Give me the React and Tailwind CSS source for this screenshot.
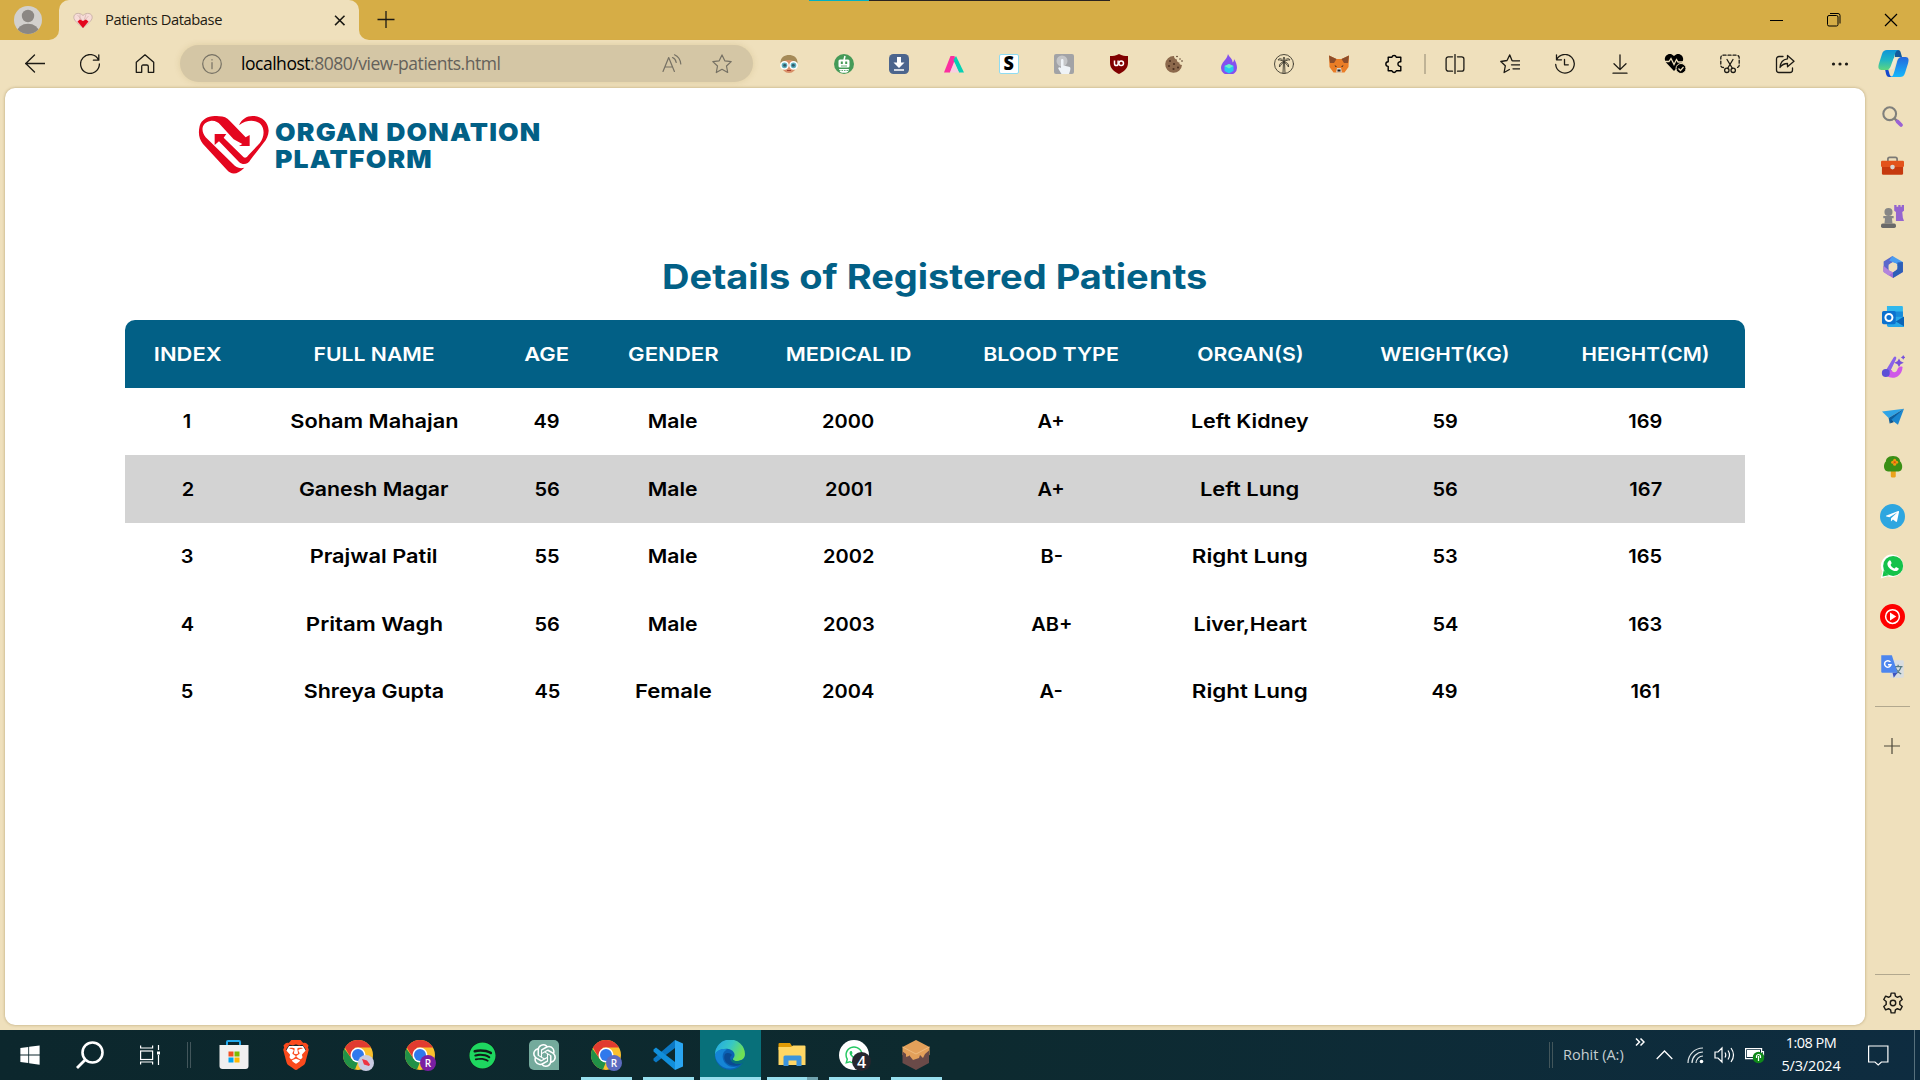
import { FaSpotify, FaWhatsapp, FaTelegramPlane, FaWindows } from "react-icons/fa";
import { SiBrave, SiOpenai } from "react-icons/si";

const columns = [
  ["INDEX", "scale-x-[1.14]"],
  ["FULL NAME", "scale-x-[1.1]"],
  ["AGE", "scale-x-[1.14]"],
  ["GENDER", "scale-x-[1.15]"],
  ["MEDICAL ID", "scale-x-[1.13]"],
  ["BLOOD TYPE", "scale-x-[1.11]"],
  ["ORGAN(S)", "scale-x-[1.1]"],
  ["WEIGHT(KG)", "scale-x-[1.08]"],
  ["HEIGHT(CM)", "scale-x-[1.075]"],
];

const patients = [
  ["1", "Soham Mahajan", "49", "Male", "2000", "A+", "Left Kidney", "59", "169"],
  ["2", "Ganesh Magar", "56", "Male", "2001", "A+", "Left Lung", "56", "167"],
  ["3", "Prajwal Patil", "55", "Male", "2002", "B-", "Right Lung", "53", "165"],
  ["4", "Pritam Wagh", "56", "Male", "2003", "AB+", "Liver,Heart", "54", "163"],
  ["5", "Shreya Gupta", "45", "Female", "2004", "A-", "Right Lung", "49", "161"],
];

const stretch = {
  "Soham Mahajan": "scale-x-[1.13]",
  "Ganesh Magar": "scale-x-[1.105]",
  "Prajwal Patil": "scale-x-[1.13]",
  "Pritam Wagh": "scale-x-[1.155]",
  "Shreya Gupta": "scale-x-[1.115]",
  Male: "scale-x-[1.1]",
  Female: "scale-x-[1.15]",
  "Left Kidney": "scale-x-[1.115]",
  "Left Lung": "scale-x-[1.14]",
  "Right Lung": "scale-x-[1.165]",
  "Liver,Heart": "scale-x-[1.105]",
};

const rowGrid = "grid grid-cols-[125px_248px_98px_154px_197px_209px_188px_202px_199px] items-center text-center";

const Line = ({ children, size = 20, w = 1.2, className = "text-[#1c1a14]" }) => (
  <svg width={size} height={size} viewBox="0 0 20 20" fill="none" stroke="currentColor" strokeWidth={w} strokeLinecap="round" strokeLinejoin="round" className={`shrink-0 ${className}`}>
    {children}
  </svg>
);
const Art = ({ children, size = 20, box = "0 0 20 20" }) => (
  <svg width={size} height={size} viewBox={box} className="shrink-0">{children}</svg>
);
const Slot = ({ children }) => <div className="flex h-full w-[55px] shrink-0 items-center justify-center">{children}</div>;

function TitleBar() {
  return (
    <div className="flex h-10 bg-[#d6ad46]">
      <div className="flex w-[59px] bg-[#efe0bc]">
        <div className="flex flex-1 items-center justify-center rounded-br-[10px] bg-[#d6ad46] pr-1">
          <svg width="28" height="28" viewBox="0 0 28 28">
            <clipPath id="av"><circle cx="14" cy="14" r="14" /></clipPath>
            <g clipPath="url(#av)">
              <rect width="28" height="28" fill="#d2d0cd" />
              <circle cx="14" cy="10" r="6.2" fill="#8b8783" />
              <ellipse cx="14" cy="26" rx="11" ry="8.2" fill="#8b8783" />
            </g>
          </svg>
        </div>
      </div>
      <div className="flex bg-[#d6ad46]">
        <div className="flex w-[300px] items-center rounded-t-[10px] bg-[#efe0bc] pl-[14px] pr-[10px]">
          <svg width="20" height="17" viewBox="0 0 20 17">
            <path d="M10 16C6 12 .8 9 .8 5.3.8 1 6.500 0 10 3.500 13.500 0 19.200 1 19.200 5.300 19.200 9 14 12 10 16z" fill="#f7dcd8" stroke="#c3a9a3" strokeWidth=".8" />
            <path d="M4.500 3 9 8M7 2.500v6M13 2.500l-2 6M15.500 4 11 9" stroke="#cdaaa5" strokeWidth=".6" />
            <path d="M4.500 9.500 7 7.500l3 1.500 3-1.500 2.500 2L10 16z" fill="#e3071d" />
          </svg>
          <span className="ml-[12px] flex-1 whitespace-nowrap pb-[2px] text-[14.7px] tracking-[-0.4px] text-[#1f1b12]">Patients Database</span>
          <Line size={18} w={1.7}><path d="M4.500 5.200 15 15.700M15 5.200 4.500 15.700" strokeLinecap="butt" /></Line>
        </div>
      </div>
      <div className="w-[10px] bg-[#efe0bc]"><div className="h-full rounded-bl-[10px] bg-[#d6ad46]" /></div>
      <div className="flex items-center pl-[7px]">
        <Line w={1.300}><path d="M1.500 9.500h17M10 1v17" strokeLinecap="butt" /></Line>
      </div>
      <div className="ml-[413px] flex h-px w-[301px]"><div className="w-[60px] bg-[#00b1c4]" /><div className="flex-1 bg-[#2b2320]" /></div>
      <div className="ml-auto flex items-center text-black">
        <div className="flex w-[57px] justify-center"><div className="h-px w-[13px] bg-black" /></div>
        <div className="flex w-[57px] justify-center">
          <svg width="14" height="14" viewBox="0 0 14 14" fill="none" stroke="black"><rect x=".5" y="2.500" width="10.500" height="10.500" rx="1.500" /><path d="M3 .5h8a2 2 0 0 1 2 2v8" /></svg>
        </div>
        <div className="flex w-[58px] justify-center">
          <svg width="14" height="14" viewBox="0 0 14 14" stroke="black" strokeWidth="1.200"><path d="M1 1l12 12M13 1 1 13" /></svg>
        </div>
      </div>
    </div>
  );
}

function Extensions() {
  const icons = [
    <Art><circle cx="10" cy="11.500" r="7.500" fill="#d98f68" /><path d="M1.500 9.500C1 3 6 1 10 1s9 2 8.500 8.500C14 7 13 6 10 6s-6 1-8.500 3.500z" fill="#a58a57" /><g stroke="#fff" strokeWidth="1.500"><circle cx="5.500" cy="11.300" r="3.600" fill="#5db0bf" /><circle cx="14.500" cy="11.300" r="3.600" fill="#5db0bf" /></g><circle cx="5.700" cy="11.300" r="1.500" fill="#365b6b" /><circle cx="14.300" cy="11.300" r="1.500" fill="#365b6b" /><path d="M8 16.500h4" stroke="#a83e30" /></Art>,
    <Art><circle cx="10" cy="10" r="10" fill="#459a58" /><path d="M10 6 11 2" stroke="#fff" strokeWidth="1.500" /><rect x="4.500" y="5.500" width="11" height="8" rx="1.500" fill="#fff" /><rect x="6.800" y="7.500" width="2" height="2.500" fill="#459a58" /><rect x="11.200" y="7.500" width="2" height="2.500" fill="#459a58" /><path d="M7 12h6" stroke="#459a58" strokeWidth=".8" /><path d="M5 15h10l-1 3a10 10 0 0 1-8 0z" fill="#fff" /><path d="M5 16.500h10" stroke="#459a58" strokeWidth=".8" strokeDasharray="1.500 1" /></Art>,
    <Art><rect width="20" height="20" rx="4.500" fill="#4c658d" /><path d="M8 3h4v5.500h3.500L10 14 4.500 8.500H8z" fill="#fff" /><path d="M5 16h10" stroke="#fff" strokeWidth="1.500" /></Art>,
    <Art><path d="M0 18.500 6.500 2h4l1 4-5.500 12.500z" fill="#fb2fa0" /><path d="m9.500 6 2.500-4 8 16.500h-5z" fill="#06d0b4" /><path d="m10 8 5 10.500H6z" fill="#f8cfe0" /></Art>,
    <div className="flex h-5 w-5 items-center justify-center rounded-[2px] border border-[#8fdcf2] bg-white pb-px text-[20px] font-extrabold leading-none text-black"><span className="scale-x-90">S</span></div>,
    <Art><rect width="20" height="20" rx="2" fill="#a2a3a6" /><circle cx="8" cy="7" r="5.500" fill="#c5c6c8" /><path d="M7 6c0-1.500 2.500-1.500 2.500 0v5.500l5.500 1.200c2 .5 1.500 2 1 4.300l-1 3H7.500L4.500 15c-1-1.500 1-2.500 2.500-1z" fill="#eff3f7" /></Art>,
    <Art><path d="M10 0c3 1.800 6 2 9 2v7c0 6-5 9-9 11-4-2-9-5-9-11V2c3 0 6-.2 9-2z" fill="#800000" /><path d="M5.500 6.500v3.200a1.800 1.800 0 0 0 3.600 0V6.500" fill="none" stroke="#fff" strokeWidth="1.500" /><circle cx="12.200" cy="9.200" r="2.300" fill="none" stroke="#fff" strokeWidth="1.500" /></Art>,
    <Art><path d="M10 2a8.400 8.400 0 1 0 8 9c-2 0-3-1-2.500-2.500-2 0-3-1.500-2.500-3C11.500 5.500 10 4 10 2z" fill="#8c694c" /><g fill="#4b3020"><circle cx="6" cy="7" r="1" /><circle cx="10" cy="10" r="1.100" /><circle cx="5" cy="12" r="1" /><circle cx="9.500" cy="15" r="1.100" /><circle cx="14" cy="13.500" r="1" /><circle cx="13" cy="2.500" r=".8" /><circle cx="16" cy="5" r=".7" /><circle cx="18" cy="7" r=".8" /></g></Art>,
    <Art><path d="M9 0c1 3 5 5 4.500 8.500C15 7.500 15 6 15 5c2 3 3 6 3 9a8 7 0 0 1-16 0C2 8 8 6 9 0z" fill="#8450ef" /><path d="m10 10 4.500 2v5L10 19.500 5.500 17v-5z" fill="#27c9f1" /><path d="m10 10 4.500 2-4.500 2.500L5.500 12z" fill="#67f0c9" /></Art>,
    <Line w={0.9} className="text-[#3c392e]"><circle cx="10" cy="10" r="9.500" /><path d="M9 19.200 9.500 8M11 19.200 10.500 8M10 8C8 4 5 4 4 6c2-.5 4 .5 6 2zM10 8c2-4 5-4 6-2-2-.5-4 .5-6 2zM10 8c-3 0-5 2-4.500 5C7 11 8 9 10 8zM10 8c3 0 5 2 4.500 5C13 11 12 9 10 8zM10 8C9 6 9 4 10 3c1 1 1 3 0 5z" /></Line>,
    <Art><path d="M0 1.500 7.500 5h5L20 1.500 19.500 13l-4 5.500h-11L.5 13z" fill="#ea7d26" /><path d="M0 1.500 7.500 5 5 9 1 9zM20 1.500 12.500 5 15 9l4 0z" fill="#8b4d2b" /><path d="M8 14h4l1 4.500H7z" fill="#ded3c8" /><path d="M8.500 15.500h3v2h-3z" fill="#222" /><path d="m5.500 11 2.500 1.500-1.500.5zM14.500 11 12 12.500l1.500.5z" fill="#3b2a24" /></Art>,
    <Line w={1.400} className="text-black"><path d="M4.200 3.200h3.700a2.300 2.300 0 0 1 4.400 0h4.500v4.500h-1a2.400 2.400 0 0 0 0 4.700h1v4.400h-4.500a2.300 2.300 0 0 1-4.400 0H4.200v-4.400a2.300 2.300 0 0 1 0-4.700z" /></Line>,
  ];
  return icons.map((ic, i) => <Slot key={i}>{ic}</Slot>);
}

function Toolbar() {
  return (
    <div className="flex h-12 items-center bg-[#efe0bc] pb-px pl-[7px]">
      <Slot><Line w={1.300}><path d="M.5 9.500H20M9.500 1 .8 9.500 9.500 18" /></Line></Slot>
      <Slot><Line w={1.300}><path d="M18.500 6A9.400 9.400 0 1 0 19.400 10M18.800.8v5.400h-5.400" /></Line></Slot>
      <Slot><Line w={1.300}><path d="M1.300 8.200 10 .8l8.700 7.400V18.300h-5.400v-5.800c0-1.300-.8-1.500-1.500-1.500H8.200c-.9 0-1.500.5-1.500 1.500v5.800H1.300z" /></Line></Slot>
      <div className="ml-2 mr-[8.5px] flex h-[37px] w-[573px] items-center rounded-full bg-[#d4c6a5] pl-[22px] pr-[21px] text-[#6e6c66] shadow-[0_0_6px_rgba(150,120,50,0.18)]">
        <Line className="text-[#767164]"><circle cx="10" cy="10" r="9.300" /><path d="M10 8.500v6.200M10 5.600v.4" /></Line>
        <span className="ml-[19px] flex-1 whitespace-nowrap pb-px text-[17.5px] tracking-[-0.47px] text-[#64615a]"><span className="text-black">localhost</span>:8080/view-patients.html</span>
        <Line className="mr-[30px] text-[#767164]"><path d="M1 17.500 6.700 3.500 12.400 17.500M3 13h7.500M10.500 3.500c2 .8 3.300 2.500 3.700 5M12.500.8c3.500 1.500 5.800 4.500 6.300 9.200" /></Line>
        <Line className="text-[#767164]"><path d="m10 .9 2.800 5.900 6.400.8-4.700 4.400 1.200 6.500L10 15.300l-5.700 3.200L5.500 12 .8 7.600l6.400-.8z" /></Line>
      </div>
      <Extensions />
      <div className="flex w-[6px] justify-center"><div className="h-5 w-[2px] bg-[#bfb396]" /></div>
      <Slot><Line w={1.300}><path d="M7.500 2.800H3.300a2.200 2.200 0 0 0-2.200 2.200v10a2.200 2.200 0 0 0 2.200 2.200h4.200M12.500 2.800h4.200a2.200 2.200 0 0 1 2.200 2.200v10a2.200 2.200 0 0 1-2.200 2.200h-4.200M10 .5v19" /></Line></Slot>
      <Slot><Line w={1.300}><path d="M12 6.500 9.800.9 7 6.500.8 7.500l4.500 4.300-1.200 6.700 5.300-3M12.500 6.800h7M11.500 10.800h8M13 14.800h6.500" /></Line></Slot>
      <Slot><Line w={1.300}><path d="M1.700 5.500A9.300 9.300 0 1 1 .7 10.500M1.500.8v5h5M9.500 5.500v5.300h3.800" /></Line></Slot>
      <Slot><Line w={1.300}><path d="M10 .8v14.500M4 9.800l6 5.800 6-5.800M3 19.200h14" /></Line></Slot>
      <Slot>
        <svg width="22" height="21" viewBox="0 0 22 21"><path d="M10 18 2 9.500C-2 4 5-2.500 10 3c5-5.500 12 1 8 6.500z" fill="#000" /><path d="M0 8.500h5l2-3 3 6 2.500-5 1.500 2.500h6" fill="none" stroke="#efe0bc" strokeWidth="1.300" /><circle cx="17" cy="15.500" r="5" fill="#000" stroke="#efe0bc" /><path d="m14.500 15.500 2 2 3-3.500" fill="none" stroke="#efe0bc" strokeWidth="1.200" /></svg>
      </Slot>
      <Slot><Line w={1.300}><path d="M3.500 13.500C1.500 13.500.8 12.500.8 11V3.800C.8 2 2 1.200 3.500 1.200h13c1.500 0 2.700.8 2.700 2.600V11c0 1.500-.7 2.500-2.700 2.500" strokeDasharray="3 2" /><path d="m7 5.500 5.500 9M13 5.500l-5.500 9" /><circle cx="6.800" cy="16.300" r="2.200" /><circle cx="13.200" cy="16.300" r="2.200" /></Line></Slot>
      <Slot><Line w={1.300}><path d="M8 2.500H4A2.500 2.500 0 0 0 1.500 5v11A2.500 2.500 0 0 0 4 18.500h11a2.500 2.500 0 0 0 2.500-2.500v-2M12.500 1.500 19 7.200l-6.500 5.600V9.500c-3.500 0-5.500 1-7.500 4C5.300 8.500 8 5.300 12.500 4.800z" /></Line></Slot>
      <Slot><Line><g fill="currentColor" stroke="none"><circle cx="3.500" cy="10" r="1.600" /><circle cx="10" cy="10" r="1.600" /><circle cx="16.500" cy="10" r="1.600" /></g></Line></Slot>
      <div className="flex w-[52px] justify-center">
        <svg width="31" height="27" viewBox="0 0 31 27">
          <defs>
            <linearGradient id="cpa" x1="0" y1="0" x2="0" y2="1"><stop offset="0" stopColor="#0f95d8" /><stop offset=".5" stopColor="#20b5c4" /><stop offset="1" stopColor="#5ed67e" /></linearGradient>
            <linearGradient id="cpb" x1="0" y1="0" x2="0" y2="1"><stop offset="0" stopColor="#2467dc" /><stop offset="1" stopColor="#15b8fb" /></linearGradient>
          </defs>
          <path d="M17 0h3c2 0 2.500 1.500 3 3.500L24 7h-7z" fill="#135a9b" />
          <path d="M11 27h4c-3 0-3.500-3-4-5l-1-3H7C8 24 8.500 27 11 27z" fill="#1448cc" />
          <path d="M9 0h12c-3 0-3.700 3-4.500 6l-2.500 9c-1 3.500-2 5-5 5H3.500C0 20 0 17 1 13.500L4 4C5 1 6.500 0 9 0z" fill="url(#cpa)" />
          <path d="M22 27H12c3 0 3.500-3 4.500-6l2.500-9c1-3.500 2-5 5-5h3.500c3.500 0 3.500 3 2.500 6.500L27 23c-1 3-2.500 4-5 4z" fill="url(#cpb)" />
          <path d="m13.500 14 1.500-4c.6-2 1.500-2.500 3.500-2.500h2.500c-2 1-2.500 2.500-3 4.500l-1.500 4.500c-.7 2-1.500 3-3.500 3h-3c2-1 2.500-2.500 3.500-5.500z" fill="#efe9d0" />
        </svg>
      </div>
    </div>
  );
}

function Logo() {
  return (
    <div className="ml-[193px] flex h-[60px] items-center">
      <svg width="71" height="60" viewBox="55 75 213 180" fill="#e4061f">
        <path d="M118 79C90 74 66 86 60 108 55 130 58 148 70 162L142 240C155 255 174 254 194 233 179 237 169 232 160 222L78 142C62 122 66 98 92 93 106 91 115 97 122 104L162 148 188 162 178 168H210V135L198 142 150 92C142 83 132 79 118 79z" />
        <path d="M105 132H140L132 143 192 202C198 205 202 201 206 196L240 160C254 141 256 118 243 103 230 89 200 88 178 106 186 86 204 76 224 78 248 80 266 97 267 122 266 136 261 148 252 158 236 180 222 196 212 210 206 222 190 227 178 216L118 154 105 165z" />
        <path d="M129 143 192 206C198 208 202 204 206 200L246 156C260 138 257 116 245 103 230 88 200 88 178 106" fill="none" stroke="#e4061f" strokeWidth="0" />
      </svg>
      <div className="ml-[6px] pt-[2px] font-['Inter'] text-[24.7px] font-black leading-[27.4px] tracking-[1.1px] text-[#026086]">
        <div className="origin-left scale-x-[1.075] whitespace-nowrap">ORGAN DONATION</div>
        <div className="origin-left scale-x-[1.075] whitespace-nowrap">PLATFORM</div>
      </div>
    </div>
  );
}

function Page() {
  return (
    <main className="ml-[5px] h-[937px] w-[1860px] shrink-0 overflow-hidden rounded-[10px] bg-white pt-[27px] shadow-[0_0_3px_rgba(110,85,30,0.45)]">
      <Logo />
      <h1 className="mt-[80px] text-center font-['Inter'] text-[34.4px] font-bold leading-[44px] text-[#026086]">
        <span className="inline-block scale-x-[1.105]">Details of Registered Patients</span>
      </h1>
      <div className="ml-[120px] mt-[21px] w-[1620px] font-['Inter'] text-[19.25px] font-[570] text-black">
        <div className={`${rowGrid} h-[68px] rounded-t-[10px] bg-[#026086] text-white`}>
          {columns.map(([label, sx]) => <div key={label}><span className={`inline-block whitespace-nowrap ${sx}`}>{label}</span></div>)}
        </div>
        {patients.map((row, r) => (
          <div key={r} className={`${rowGrid} ${r % 2 ? "h-[68px]" : "h-[67px]"} ${r === 1 ? "bg-[#d3d3d3]" : ""}`}>
            {row.map((v, c) => <div key={c}><span className={`inline-block whitespace-nowrap ${stretch[v] ?? "scale-x-[1.04]"}`}>{v}</span></div>)}
          </div>
        ))}
      </div>
    </main>
  );
}

function Sidebar() {
  const icons = [
    <Art size={22}><circle cx="7" cy="7" r="5.800" fill="none" stroke="#80807c" strokeWidth="1.900" /><path d="m11.500 11.500 2.500 2.500" stroke="#80807c" strokeWidth="2" /><path d="m14 14 3.300 3.300" stroke="#9b62d3" strokeWidth="3.400" strokeLinecap="round" /></Art>,
    <Art size={23}><path d="M6 6V3.500c0-1 .5-1.500 1.500-1.500h5c1 0 1.500.5 1.500 1.500V6" fill="none" stroke="#7c7a75" strokeWidth="1.500" /><rect x="0" y="5" width="20" height="5.500" rx="1" fill="#e3531b" /><path d="M.8 10.500h18.400V16q0 1.200-1.200 1.200H2Q.8 17.200.8 16z" fill="#c63a0e" /><circle cx="10" cy="10.500" r="2" fill="#dad7d2" /></Art>,
    <Art size={23}><g fill="#868686"><circle cx="6.500" cy="6" r="3.500" /><path d="M2 9.500h9v2H9.500L10 16H3l.5-4.500H2z" /><rect x="0" y="16" width="13" height="4" rx="1.500" fill="#696969" /></g><path d="M11.500 0h2v1.500h1.500V0h2v1.500H18V0h2v5l-1.500 1 .5 5 1 3h-7V6l-1.500-1z" fill="#9565cf" /></Art>,
    <Art size={22}><path d="M9.500 0 1.500 5v9l4.500 2.500V8l7-4.500z" fill="#5a68cc" /><path d="M9.500 0 19 5.500V14l-5-2.500v-4L6.500 4z" fill="#4a9df0" /><path d="M19 8v6.500L10 20 1.500 14.500V9L6 13l4 2z" fill="#9b6ad6" /><path d="M19 5.500v9l-9 5.500v-5l4-3V6z" fill="#2c5fb7" /><path d="M8 6.500h4.500L14 10l-2 3.500H8L6 10z" fill="#efe0bc" /><path d="M1.500 9 6 13l4 2-4 2.700L1.500 14.500z" fill="#b384dc" /></Art>,
    <Art size={22}><path d="M4.500 0H18q1 0 1 1v8H4.500z" fill="#30b8ed" /><path d="M5 5h14v5H5z" fill="#168ada" /><path d="M4.500 9.500 20 10v9H6q-1.500 0-1.500-1.500z" fill="#27a7e8" /><path d="M20 9.500v9L12.500 14z" fill="#0b64b6" /><rect y="4.500" width="12.500" height="12" rx="1.500" fill="#0b71cf" /><circle cx="6.300" cy="10.500" r="3.200" fill="none" stroke="#fff" strokeWidth="1.800" /></Art>,
    <Art size={24}><path d="M3 13c0 8 14 9 15-3-2.500-1-3.800.5-4.500 2.500-1 2.500-4 2.500-4.500 0z" fill="#cf58e8" /><path d="m4 13 6.500-11c1-1.500 3-.5 2 1.500L7.500 14z" fill="#8a63e8" /><circle cx="4" cy="15" r="3.300" fill="#5d50d6" /><path d="m15 3 1.300 2.200L19 6.500l-2.700 1.300L15 10l-1.300-2.200L11 6.500l2.700-1.300zM18.500 0l.7 1.300 1.300.7-1.300.7-.7 1.300-.7-1.300-1.300-.7 1.300-.7z" fill="#7751db" /></Art>,
    <Art size={22}><path d="M0 5 20 2.500 6 11z" fill="#2fa4e6" /><path d="M20 2.500 6 11l1 5z" fill="#0d5f9f" /><path d="M20 2.500 14.500 17 8.500 12.500z" fill="#1a86cf" /><path d="m7 16 2-3 2 1.500z" fill="#0b4f88" /></Art>,
    <Art size={22}><path d="M8 13h4.500v5.500q0 1-1 1H9q-1 0-1-1z" fill="#eba21c" /><path d="M10 0C5 0 3.500 3 3.500 5 1 7 1 14 5.500 14h9.500c4.500 0 4-7 1.500-9C16.500 3 15 0 10 0z" fill="#3a8f15" /><g fill="#f0980f"><circle cx="11.500" cy="4" r="1.400" /><circle cx="11.500" cy="7.500" r="1.400" /><circle cx="9.700" cy="5.700" r="1.400" /><circle cx="13.300" cy="5.700" r="1.400" /></g><circle cx="11.500" cy="5.700" r="1" fill="#e04412" /></Art>,
    <div className="flex h-[25px] w-[25px] items-center justify-center rounded-full bg-[#2ea6e0] text-white"><FaTelegramPlane size={15} /></div>,
    <Art size={25}><path d="M10.500.5a9 9 0 1 1-4.300 17.300L.5 19.500 2 14A9 9 0 0 1 10.500.5z" fill="#fff" /><circle cx="10.500" cy="9.500" r="8" fill="#14c24a" /><path d="M2 18 3 13l4 4z" fill="#14c24a" /><path d="M7 5.500c1-1 1.700-.3 2.200 1.500.3 1-.8 1.300-.7 1.700.5 1.500 2 2.500 3 2.900.5.100 1-1.300 1.600-1.100 2.400 1 2 1 1.600 2.100C13 15.500 6 12 5.900 8c0-1 .4-1.800 1.100-2.500z" fill="#fff" /></Art>,
    <Art size={25}><circle cx="10" cy="10" r="10" fill="#fe0000" /><circle cx="10" cy="10" r="5.500" fill="none" stroke="#fff" strokeWidth="1.200" /><path d="m8 6.800 5 3.200-5 3.200z" fill="#fff" /></Art>,
    <Art size={25}><rect x="8" y="5" width="11" height="14" rx="1" fill="#d9dde0" /><path d="M11 10h7M14.500 8.500V10M12 10c1 3 3 5 5 6M17 10c-1 3-3 5-5 6" fill="none" stroke="#577b86" /><path d="M1 1h8.500L14 15H1.800Q1 15 1 14z" fill="#4d86ee" /><path d="M10 15h4l-3 4z" fill="#3b53c0" /><path d="M8.300 6.300A2.600 2.600 0 1 0 8.800 8.500H6.400" fill="none" stroke="#fff" strokeWidth="1.200" /></Art>,
  ];
  return (
    <aside className="flex w-[55px] flex-col items-center pt-[3px]">
      {icons.map((ic, i) => <div key={i} className="flex h-[50px] w-full shrink-0 items-center justify-center pt-px">{ic}</div>)}
      <div className="mt-[15px] h-px w-[35px] bg-[#b2a88e]" />
      <div className="mr-px mt-[31px]"><Line size={16} w={1.500} className="text-[#4c483b]"><path d="M0 10h20M10 0v20" /></Line></div>
      <div className="mt-auto h-px w-[35px] bg-[#b2a88e]" />
      <div className="mb-[16px] mt-[17px]">
        <Line size={22} w={1.300}><path d="M8.300 1h3.400l.5 2.800 1.800 1 2.700-1 1.700 3-2.200 1.800v2.800l2.200 1.800-1.700 3-2.700-1-1.800 1-.5 2.800H8.300l-.5-2.800-1.800-1-2.700 1-1.700-3 2.200-1.800V8.600L1.600 6.800l1.700-3 2.700 1 1.800-1z" /><circle cx="10" cy="10" r="2.500" /></Line>
      </div>
    </aside>
  );
}

const Chrome = ({ badge, letter }) => (
  <div className="relative h-[30px] w-[30px]">
    <svg width="30" height="30" viewBox="0 0 30 30">
      <clipPath id="chr"><circle cx="15" cy="15" r="15" /></clipPath>
      <g clipPath="url(#chr)">
        <rect width="30" height="30" fill="#fbc02d" />
        <path d="M-2 4 8.500 18.500 15 22 11 32H-4z" fill="#219147" />
        <path d="M1 6 8 18 12 7.500h20V-2H2z" fill="#e13b30" />
      </g>
      <circle cx="15" cy="15" r="7.500" fill="#fff" /><circle cx="15" cy="15" r="6" fill="#3079ec" />
    </svg>
    <div className={`absolute -bottom-px -right-px flex h-4 w-4 items-center justify-center rounded-full text-[10px] font-semibold leading-none text-white ${badge}`}>
      {letter || <svg width="10" height="8" viewBox="0 0 10 8"><path d="M1 0l5 1.500L9 5.500 8 7 3 5.500z" fill="#ee3342" /></svg>}
    </div>
  </div>
);

function Taskbar() {
  const apps = [
    [<svg width="30" height="30" viewBox="0 0 30 30"><path d="M8 6V2q0-1 1-1h11q1 0 1 1v4" fill="none" stroke="#23a9ec" strokeWidth="2" /><path d="M.5 5h29v21q0 3-3 3h-23q-3 0-3-3z" fill="#f0f0f0" /><path d="M9.500 11.500h5v5h-5z" fill="#f25022" /><path d="M15.500 11.500h5v5h-5z" fill="#7fba00" /><path d="M9.500 17.500h5v5h-5z" fill="#00a4ef" /><path d="M15.500 17.500h5v5h-5z" fill="#ffb900" /></svg>],
    [<div className="relative h-[30px] w-[30px]"><svg width="30" height="30" viewBox="0 0 30 30"><path d="M8 6h14l3 5-3 9-7 7-7-7-3-9z" fill="#fff" /></svg><SiBrave size={30} className="absolute left-0 top-0 text-[#fb4a1d]" /></div>],
    [<Chrome badge="bg-[#c9cbe2]" />],
    [<Chrome badge="bg-[#7b1fa2]" letter="R" />],
    [<div className="rounded-full bg-[#101c18]"><FaSpotify size={27} className="text-[#1ed760]" /></div>],
    [<div className="flex h-[30px] w-[30px] items-center justify-center rounded-[5px] rounded-br-none bg-[#74aa9c] text-white"><SiOpenai size={23} /></div>],
    [<Chrome badge="bg-[#5c6bc0]" letter="R" />, "full"],
    [<svg width="30" height="30" viewBox="0 0 30 30"><path d="M22 0 30 3.500v23L22 30z" fill="#2aa6f1" /><path d="M22 8 3 22.500.5 20.500v-2L22 0z" fill="#0b78c4" /><path d="M22 22 3 7.500.5 9.500v2L22 30z" fill="#118fdb" /></svg>, "full"],
    [<svg width="30" height="30" viewBox="0 0 30 30"><defs><linearGradient id="eg" x1="0" y1="0" x2="1" y2=".4"><stop offset="0" stopColor="#23a6e6" /><stop offset=".55" stopColor="#37c7c5" /><stop offset="1" stopColor="#6fe155" /></linearGradient></defs><circle cx="15" cy="15" r="15" fill="#0b62b4" /><path d="M0 15A15 15 0 0 1 30 14c0 5-4 7-8 7-3.500 0-5-1.500-3.500-3C21 15 19 10 13.500 9 6 8 1 12 0 15z" fill="url(#eg)" /><path d="M0 15c1-4 6-7 12-5.500-5 2-6 9-1.500 14 3 3.500 8 4 12 3A15 15 0 0 1 0 15z" fill="#1585d6" /><path d="M10 14c-2 4 0 9 5 11 4 1.500 9 1 13-2-4 2-10 1-12-2.500-1.500-2-1-4 1-5.500-1-2-5-3-7-1z" fill="#0a4a92" /><path d="M18.500 18c-1.500 1.500 0 3 3.500 3 3 0 6-1 8-4-.2 2.500-1 4.500-2.200 6-3.800 2-10.300 1-11.800-2.500z" fill="#07707a" /></svg>, "active"],
    [<svg width="28" height="24" viewBox="0 0 28 24"><path d="M.5 1Q.5 0 1.500 0H12l2 3v4H.5z" fill="#e09b05" /><path d="M.5 4H13l2-1.500h11.500q1 0 1 1V22H.5z" fill="#ffd765" /><path d="M5.500 23v-9q0-1.500 1.500-1.500h15q1.500 0 1.500 1.500v9h-5v-5.500h-8V23z" fill="#3b94dd" /></svg>, "stack"],
    [<div className="relative flex h-[30px] w-[30px] items-center justify-center rounded-full bg-white"><FaWhatsapp size={20} className="text-[#25c863]" /><div className="absolute -right-[2px] top-[12px] flex h-[19px] w-[19px] items-center justify-center rounded-full bg-[#26272e] text-[16px] font-semibold leading-none text-white">4</div></div>, "full"],
    [<svg width="28" height="30" viewBox="0 0 28 30"><path d="M14 0 27.500 7v8L14 22 .5 15V7z" fill="#e3a05a" /><path d="M.5 11.500 4 14v3l3-1v-1l4 5 3-1 3-1 1-3 3 3 2-4 4-3.500V23L14 30 .5 23z" fill="#6a4a48" /><path d="M.5 7 14 14l13.500-7" fill="none" stroke="#efbb7e" /></svg>, "full"],
  ];
  return (
    <footer className="flex h-[50px] bg-linear-to-r from-[#0c272d] via-[#0d2a2f] to-[#0e2c40] text-white">
      <div className="flex w-[60px] items-center justify-center"><FaWindows size={22} /></div>
      <div className="flex w-[60px] items-center justify-center">
        <svg width="28" height="28" viewBox="0 0 28 28" fill="none" stroke="white"><circle cx="16.500" cy="11.500" r="10" strokeWidth="2.600" /><path d="M9.500 18.500 1 27" strokeWidth="2.800" /></svg>
      </div>
      <div className="flex w-[60px] items-center justify-center">
        <svg width="20" height="20" viewBox="0 0 20 20" fill="none" stroke="white" strokeWidth="1.200"><rect x=".6" y="6" width="12" height="8.500" /><path d="M.6.500V3h12V.5M.6 19.500V17h12v2.500M18.500 0v5M18.500 10v10" /><path d="M17 6.500h3v3h-3z" fill="white" stroke="none" /></svg>
      </div>
      <div className="flex w-[17px] items-center justify-center gap-[2px]"><div className="h-[26px] w-px bg-[#42565b]" /><div className="h-[26px] w-px bg-[#42565b]" /></div>
      <div className="ml-[6px] flex">
        {apps.map(([icon, state], i) => (
          <div key={i} className="flex w-[62px] justify-center">
            <div className={`flex flex-col items-center ${state === "active" ? "w-[61px] bg-[#08707a]" : "w-[51px]"}`}>
              <div className="flex h-[47px] items-center pt-[3px]">{icon}</div>
              {state && <div className="flex h-[3px] w-full bg-[#97dfee]">{state === "stack" && <div className="ml-auto w-[11px] bg-[#6fa3ae]" />}</div>}
            </div>
          </div>
        ))}
      </div>
      <div className="ml-auto flex w-[371px] items-center">
        <div className="flex w-[4px] justify-between"><div className="h-[26px] w-px bg-[#42565b]" /><div className="h-[26px] w-px bg-[#42565b]" /></div>
        <span className="ml-[10px] w-[72px] whitespace-nowrap text-[14.5px] text-[#c5ced0]">Rohit (A:)</span>
        <svg width="10" height="8" viewBox="0 0 10 8" className="-mt-[27px]" fill="none" stroke="white" strokeWidth="1.500"><path d="m1 .5 3.500 3.500L1 7.500M5.500.5 9 4 5.500 7.500" /></svg>
        <svg width="17" height="10" viewBox="0 0 17 10" className="ml-[11px]" fill="none" stroke="white" strokeWidth="1.300"><path d="m.7 9 7.800-8 7.800 8" /></svg>
        <svg width="17" height="17" viewBox="0 0 17 17" className="ml-[14px]" fill="none" stroke="#dfe6e8" strokeWidth="1.200"><path d="M1 16A15 15 0 0 1 16 1M5 16A11 11 0 0 1 16 5M9 16a7 7 0 0 1 7-7" /><circle cx="14.500" cy="14.500" r="1.800" fill="white" stroke="none" /></svg>
        <svg width="22" height="18" viewBox="0 0 22 18" className="ml-[10px]" fill="none" stroke="white" strokeWidth="1.200"><path d="M1 6h3l4-4v14l-4-4H1zM11 6.500q1.500 2.500 0 5M14 4.500q3 4.500 0 9M17 2q5 7 0 14" /></svg>
        <svg width="20" height="18" viewBox="0 0 20 18" className="ml-[9px]"><path d="M.6 2.600h16v10H.6zM17 5.500h1.500v4H17" fill="none" stroke="white" strokeWidth="1.200" /><path d="M2 4h13v7H2z" fill="white" /><circle cx="13.500" cy="11.500" r="5.800" fill="#10891a" /><path d="M13.500 15v-5M11.500 12v-1.500a2 2 0 0 1 4 0V12" fill="none" stroke="white" strokeWidth="1.200" /></svg>
        <div className="ml-[11px] w-[70px] text-center text-[14.5px] leading-[22.6px]"><div className="tracking-[-0.5px]">1:08 PM</div><div className="tracking-[-0.15px]">5/3/2024</div></div>
        <svg width="21" height="21" viewBox="0 0 21 21" className="ml-[22px]" fill="none" stroke="white" strokeWidth="1.200"><path d="M.6 1h19.300v16h-6.500L10.200 20 7 17H.6z" /></svg>
        <div className="ml-auto mr-[5px] h-full w-px bg-[#57707c]" />
      </div>
    </footer>
  );
}

export default function App() {
  return (
    <div className="flex h-[1080px] w-[1920px] flex-col overflow-hidden bg-[#efe0bc] font-['Open_Sans',sans-serif]">
      <TitleBar />
      <Toolbar />
      <div className="flex h-[942px]">
        <Page />
        <Sidebar />
      </div>
      <Taskbar />
    </div>
  );
}
